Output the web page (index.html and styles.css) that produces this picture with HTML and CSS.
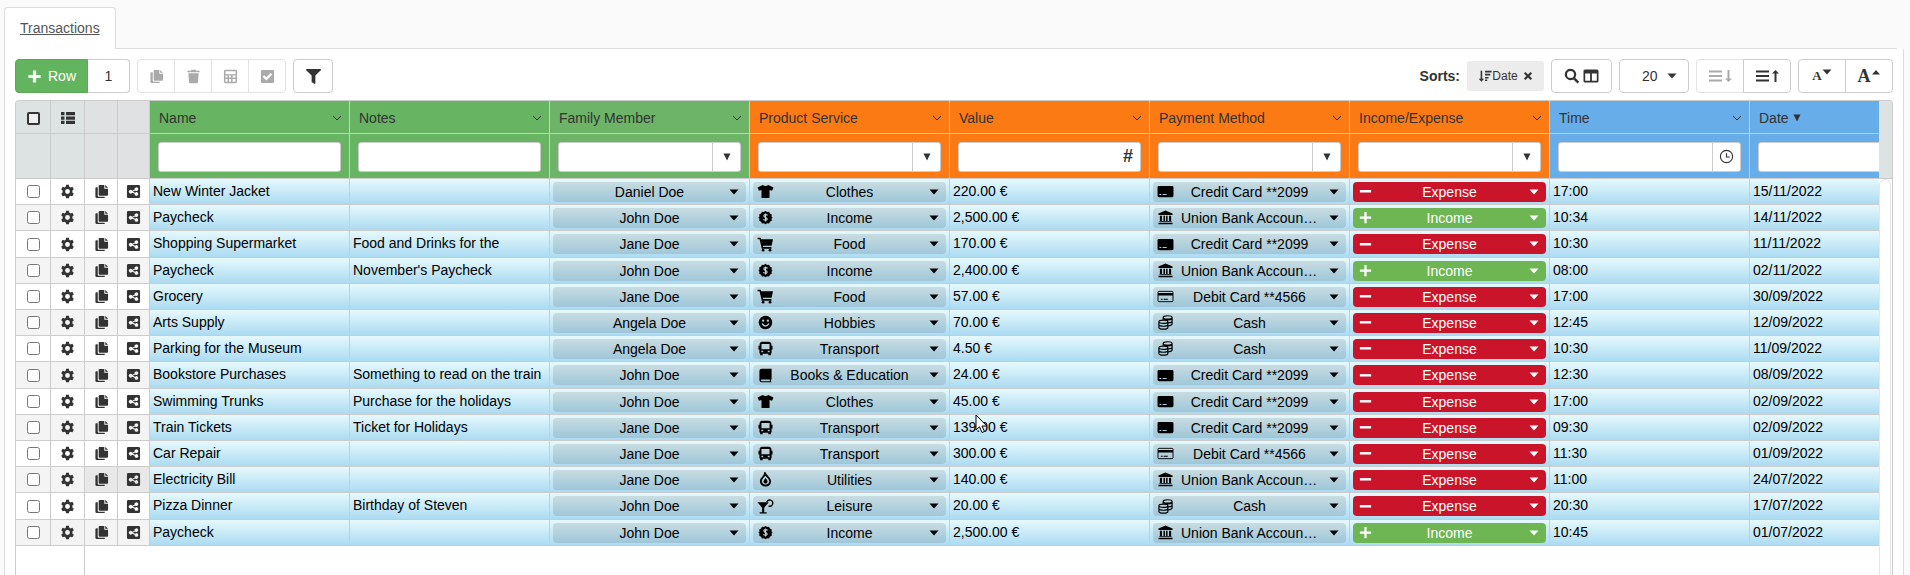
FILE: index.html
```html
<!DOCTYPE html>
<html lang="en">
<head>
    <meta charset="UTF-8">
    <meta name="viewport" content="width=device-width, initial-scale=1.0">
    <title>Transactions</title>
    <link rel="stylesheet" href="styles.css">
</head>
<body>
    <!-- Icon sprite -->
    <svg class="sprite" aria-hidden="true">
        <symbol id="i-plus" viewBox="0 0 16 16"><path d="M6.3 1.5h3.4v4.8h4.8v3.4H9.7v4.8H6.3V9.7H1.5V6.3h4.8z"/></symbol>
        <symbol id="i-plus-thin" viewBox="0 0 16 16"><path d="M6.8 2h2.4v4.8H14v2.4H9.2V14H6.8V9.2H2V6.8h4.8z"/></symbol>
        <symbol id="i-minus" viewBox="0 0 16 16"><path d="M2 6.5h12v2.6H2z"/></symbol>
        <symbol id="i-copy" viewBox="0 0 16 16"><path d="M6 1h5v4h4v6.500q0 1-1 1H6q-1 0-1-1V2q0-1 1-1zM12 1l3 3h-3zM4 3.500v9q0 1 1 1h6.500V14q0 1-1 1H3q-1.500 0-1.500-1.500v-9q0-1 1-1z"/></symbol>
        <symbol id="i-trash" viewBox="0 0 16 16"><path d="M6 .8h4l.7 1H14.500v1.700h-13V1.800h3.800zM2.500 4.500h11l-.7 9.500q-.1 1.200-1.300 1.200h-7q-1.200 0-1.300-1.200z"/></symbol>
        <symbol id="i-calc" viewBox="0 0 16 16"><path fill-rule="evenodd" d="M2.500.8h11Q15 .8 15 2.300v11.400q0 1.500-1.500 1.500h-11Q1 15.200 1 13.700V2.300Q1 .8 2.500.8zM2.600 2.400v3.200h10.800V2.400zM2.600 7v2h2.200V7zm3.800 0v2h2.200V7zm3.800 0v2h3.200V7zM2.600 10.600v3h2.200v-3zm3.800 0v3h2.200v-3zm3.800 0v3h3.200v-3z"/></symbol>
        <symbol id="i-check" viewBox="0 0 16 16"><path fill-rule="evenodd" d="M2.500 1h11Q15 1 15 2.500v11q0 1.500-1.500 1.500h-11Q1 15 1 13.500v-11Q1 1 2.500 1zm4.300 11.300 6.400-6.400-1.700-1.700-4.700 4.700-2.300-2.300-1.700 1.700z"/></symbol>
        <symbol id="i-filter" viewBox="0 0 512 512"><path d="M487.976 0H24.028C2.71 0-8.047 25.866 7.058 40.971L192 225.941V432c0 7.831 3.821 15.170 10.237 19.662l80 55.980C298.020 518.690 320 507.493 320 487.980V225.941l184.947-184.970C520.021 25.896 509.338 0 487.976 0z"/></symbol>
        <symbol id="i-list" viewBox="0 0 16 16"><path d="M1 2h3.500v3.300H1zm5 0h9v3.300H6zM1 6.400h3.500v3.300H1zm5 0h9v3.300H6zm-5 4.400h3.500V14H1zm5 0h9V14H6z"/></symbol>
        <symbol id="i-gear" viewBox="0 0 16 16"><path fill-rule="evenodd" d="M6.500.8h3l.4 2 1.300.8 2-.7 1.500 2.600-1.500 1.400v2.200l1.500 1.400-1.500 2.600-2-.7-1.300.8-.4 2h-3l-.4-2-1.300-.8-2 .7-1.500-2.600 1.500-1.400V6.900L1.300 5.500l1.500-2.600 2 .7 1.300-.8zM8 5.400a2.600 2.600 0 1 0 0 5.200 2.600 2.600 0 1 0 0-5.200z"/></symbol>
        <symbol id="i-share" viewBox="0 0 16 16"><path fill-rule="evenodd" d="M2.500 1h11Q15 1 15 2.500v11q0 1.500-1.500 1.500h-11Q1 15 1 13.500v-11Q1 1 2.500 1zm8.500 2.600a1.900 1.900 0 0 0-1.800 2.500L6.500 7.200a1.900 1.900 0 1 0 0 2l2.700 1.300a1.900 1.900 0 1 0 .6-1.200L7 8.200l2.800-1.400A1.900 1.900 0 1 0 11 3.600z"/></symbol>
        <symbol id="i-sort" viewBox="0 0 16 16"><path d="M3 2h1.800v9H7l-3.100 3.500L.8 11H3zM8 2h7.500v2H8zm0 3.500h6v1.800H8zM8 9h4v1.800H8zm0 3h2.500v1.800H8z"/></symbol>
        <symbol id="i-close" viewBox="0 0 16 16"><path d="M4 1.500 8 5.600l4-4.100L14.500 4l-4 4 4 4-2.500 2.500-4-4.100-4 4.100L1.500 12l4-4-4-4z"/></symbol>
        <symbol id="i-search" viewBox="0 0 16 16"><path fill-rule="evenodd" d="M6.500.8a5.700 5.700 0 0 1 4.700 8.900l4 4-1.700 1.800-4.100-4.100A5.700 5.700 0 1 1 6.500.8zm0 2.200a3.500 3.500 0 1 0 0 7 3.500 3.500 0 1 0 0-7z"/></symbol>
        <symbol id="i-columns" viewBox="0 0 16 16"><path fill-rule="evenodd" d="M2 1.500h12q1.500 0 1.500 1.500v10q0 1.500-1.500 1.500H2Q.5 14.500.5 13V3Q.5 1.500 2 1.500zm.2 4v7.300h4.900V5.500zm6.700 0v7.300h4.900V5.500z"/></symbol>
        <symbol id="i-lines-down" viewBox="0 0 24 16"><path d="M1 2.500h13v2H1zm0 4.500h13v2H1zm0 4.500h13v2H1zM19.500 2h2v8.500H24L20.500 14 17 10.500h2.500z"/></symbol>
        <symbol id="i-lines-up" viewBox="0 0 24 16"><path d="M1 2.500h13v2H1zm0 4.500h13v2H1zm0 4.500h13v2H1zM19.500 14h2V5.500H24L20.500 2 17 5.500h2.500z"/></symbol>
        <symbol id="i-caret" viewBox="0 0 10 6"><path d="M.5.5h9L5 5.500z"/></symbol>
        <symbol id="i-caret-up" viewBox="0 0 10 6"><path d="M1 5.500h8L5 1z"/></symbol>
        <symbol id="i-triangle" viewBox="0 0 8 8"><path d="M.5.5h7L4 7.500z"/></symbol>
        <symbol id="i-chevron" viewBox="0 0 10 6"><path d="M1 1l4 4 4-4" fill="none" stroke="currentColor"/></symbol>
        <symbol id="i-clock" viewBox="0 0 16 16"><path d="M8 1.500a6.500 6.500 0 1 0 0 13 6.500 6.500 0 1 0 0-13M8 4.500v4h3.500" fill="none" stroke="currentColor" stroke-width="1.200"/></symbol>
        <symbol id="i-shirt" viewBox="0 0 18 16"><path d="M6 1q3 2 6 0l5.500 2.600L16 7.200l-2.700-.8V15H4.700V6.400L2 7.200.5 3.600z"/></symbol>
        <symbol id="i-income" viewBox="0 0 16 16"><path d="M8 .8l1.700 1.300 2.100-.3.900 2 2 .9-.3 2.100L15.500 8l-1.100 1.400.3 2.100-2 .9-.9 2-2.100-.3L8 15.300l-1.700-1.200-2.100.3-.9-2-2-.9.300-2.100L.5 8l1.100-1.200-.3-2.100 2-.9.900-2 2.100.3z"/><path d="M10.300 5.600Q8 4.300 6.500 5.400q-.8 1.600 1.500 2.500 2.500 1 1.500 2.500-1.500 1-3.900-.2M8 3.600v8.700" fill="none" stroke="#b9d5df" stroke-width="1.200"/></symbol>
        <symbol id="i-cart" viewBox="0 0 18 16"><path d="M.5.8h3.300l.5 1.700H17l-1.500 6.700H6.200l.3 1.500h8.800V12.400H5L2.700 2.500H.5z"/><circle cx="6.500" cy="14" r="1.500"/><circle cx="13.800" cy="14" r="1.500"/></symbol>
        <symbol id="i-smile" viewBox="0 0 16 16"><circle cx="8" cy="8" r="7.200"/><path d="M4.300 9.300q3.700 5 7.400 0" fill="none" stroke="#b9d5df" stroke-width="1.400"/><circle cx="5.500" cy="6" r="1.200" fill="#b9d5df"/><circle cx="10.500" cy="6" r="1.200" fill="#b9d5df"/></symbol>
        <symbol id="i-bus" viewBox="0 0 16 16"><path fill-rule="evenodd" d="M4 .8h8q2 .4 2.300 2.200V5H15.500v4h-1v3.500q0 .8-.8 1v1.800h-2.700v-1.600H5v1.600H2.300v-1.800q-.8-.2-.8-1V9H.5V5h1.200V3Q2 1.200 4 .8zM3.700 3.200v5.500h8.600V3.200zM3.600 10.400v1.500h2v-1.500zm6.800 0v1.500h2v-1.500z"/></symbol>
        <symbol id="i-book" viewBox="0 0 16 16"><path fill-rule="evenodd" d="M4 .8h10.500v10.800q-.7.500-.7 1.700t.7 1.900H4q-2.500 0-2.500-2.500V3.300Q1.500.8 4 .8zm0 11.500q-1 .2-1 .9t1 .9h8.600v-1.800z"/></symbol>
        <symbol id="i-drop" viewBox="0 0 16 16"><path d="M7.500 1.500q1.200 2 3.800 4.700Q13 8 13 10q-.5 4.300-5 4.500-4.500-.3-5-4.500 0-2.500 2.500-4.800Q7.300 3.300 7.500 1.500z" fill="none" stroke="currentColor" stroke-width="2"/><path d="M8 6.500q2.300 2.700 2.200 3.800-.5 2-2.200 2-1.800 0-2.200-2Q6 9 8 6.500z"/></symbol>
        <symbol id="i-cocktail" viewBox="0 0 18 16"><path d="M.5 3.500h12L7.600 9.300V14h2.600v1.500H2.800V14h2.600V9.300z"/><path d="M10.300 3.200a3.300 3.300 0 1 1 2 4.300" fill="none" stroke="currentColor" stroke-width="1.500"/></symbol>
        <symbol id="i-credit" viewBox="0 0 18 16"><path fill-rule="evenodd" d="M2 2h14q1.500 0 1.500 1.500v9q0 1.500-1.500 1.500H2Q.5 14 .5 12.500v-9Q.5 2 2 2zm.6 8.600v1.200h2v-1.200zm3.400 0v1.200h4.300v-1.200z"/></symbol>
        <symbol id="i-debit" viewBox="0 0 18 16"><path fill="none" stroke="currentColor" d="M2 2.500h14q1 0 1 1v9q0 1-1 1H2q-1 0-1-1v-9q0-1 1-1z"/><path d="M1 4.200h16v2.600H1zM4 10.500h2v1H4zm3 0h4.500v1H7z"/></symbol>
        <symbol id="i-bank" viewBox="0 0 16 16"><path d="M8 .5l7.500 3.200v1.500H.5V3.700zM2 6h2.200v5.800h1.600V6H7.400v5.800h1.200V6h1.600v5.800h1.600V6H14v5.800l1 .7H1l1-.7zM.5 13.500h15V15.300H.5z"/></symbol>
        <symbol id="i-coins" viewBox="0 0 16 16"><path fill="none" stroke="currentColor" stroke-width="1.300" d="M5.500 2.600c0-2.400 9.500-2.400 9.500 0s-9.500 2.400-9.500 0v2.600M15 2.600v7.200q-.5 1.300-3.800 1.700M6.500 4.300q4.500 1.700 8.400.2M11 8.500q3.500-.2 4-1.700M1 7.200c0-2.400 9.500-2.400 9.500 0s-9.500 2.400-9.500 0v6c0 2.400 9.500 2.400 9.500 0v-6M1 10.200c0 2.400 9.500 2.400 9.500 0"/></symbol>
    </svg>

    <nav class="tabs">
        <a class="tab" href="#transactions">Transactions</a>
    </nav>

    <main class="panel" id="transactions">
        <div class="toolbar">
            <div class="btn-group">
                <button class="btn btn-add" type="button"><svg class="icon"><use href="#i-plus"/></svg>Row</button>
                <input class="row-count" type="text" value="1" aria-label="Number of rows to add">
            </div>
            <div class="btn-group tools">
                <button class="btn" type="button" disabled aria-label="Duplicate"><svg class="icon"><use href="#i-copy"/></svg></button>
                <button class="btn" type="button" disabled aria-label="Delete"><svg class="icon"><use href="#i-trash"/></svg></button>
                <button class="btn" type="button" disabled aria-label="Calculate"><svg class="icon"><use href="#i-calc"/></svg></button>
                <button class="btn" type="button" disabled aria-label="Select"><svg class="icon"><use href="#i-check"/></svg></button>
            </div>
            <button class="btn btn-filter" type="button" aria-label="Filter"><svg class="icon"><use href="#i-filter"/></svg></button>

            <strong class="sorts-label">Sorts:</strong>
            <button class="sort-chip" type="button"><svg class="icon"><use href="#i-sort"/></svg>Date<svg class="icon icon-close"><use href="#i-close"/></svg></button>
            <button class="btn btn-search" type="button" aria-label="Search columns"><svg class="icon"><use href="#i-search"/></svg><svg class="icon"><use href="#i-columns"/></svg></button>
            <div class="page-size">
                <select aria-label="Rows per page"><option>20</option></select>
                <svg class="caret"><use href="#i-caret"/></svg>
            </div>
            <div class="btn-group heights">
                <button class="btn" type="button" disabled aria-label="Decrease row height"><svg class="icon-wide"><use href="#i-lines-down"/></svg></button>
                <button class="btn" type="button" aria-label="Increase row height"><svg class="icon-wide"><use href="#i-lines-up"/></svg></button>
            </div>
            <div class="btn-group fonts">
                <button class="btn" type="button" aria-label="Smaller text"><span class="font-small">A</span><svg class="caret"><use href="#i-caret"/></svg></button>
                <button class="btn" type="button" aria-label="Larger text"><span class="font-large">A</span><svg class="caret"><use href="#i-caret-up"/></svg></button>
            </div>
        </div>

        <div class="grid">
            <div class="viewport">
                <table>
                    <colgroup>
                        <col class="col-check"><col class="col-menu"><col class="col-copy"><col class="col-share">
                        <col><col><col><col><col><col><col><col><col>
                    </colgroup>
                    <thead>
                        <tr class="titles" id="titles"></tr>
                        <tr class="filters" id="filters"></tr>
                    </thead>
                    <tbody id="rows"></tbody>
                </table>
                <div class="filler"></div>
                <svg class="pointer" viewBox="0 0 13 20" aria-hidden="true"><path d="M1 1v15l3.500-3.300L7 18.500l2.500-1L7 12h4.800z"/></svg>
            </div>
            <div class="scroll">
                <div class="scroll-head"></div>
                <div class="scroll-thumb"></div>
            </div>
        </div>
    </main>

    <script src="script.js"></script>
</body>
</html>
```
FILE: styles.css
```css
:root {
    --line: #ccc;
    --green: #67b462;
    --orange: #fb7a14;
    --blue: #66ade9;
    --income: #6eb554;
    --expense: #c91429;
    --text: #333;
}

* {
    box-sizing: border-box;
}

body {
    display: flex;
    flex-direction: column;
    height: 100vh;
    margin: 0;
    overflow: hidden;
    background: #fafafa;
    color: var(--text);
    font-family: "Liberation Sans", Arial, sans-serif;
    font-size: 14px;
}

button, input, select {
    font: inherit;
    color: inherit;
}

svg {
    display: block;
    fill: currentColor;
}

.sprite {
    display: none;
}

.icon {
    flex: none;
    width: 15px;
    height: 15px;
}

.icon-wide {
    width: 24px;
    height: 16px;
}

.caret {
    width: 10px;
    height: 6px;
    pointer-events: none;
}

/* Tabs */
.tabs {
    display: flex;
    margin: 7px 13px 0 4px;
    border-bottom: 1px solid #ddd;
}

.tab {
    height: 42px;
    margin-bottom: -1px;
    padding: 0 15px;
    border: 1px solid #ddd;
    border-bottom: 0;
    border-radius: 4px 4px 0 0;
    background: #fff;
    color: #555;
    line-height: 41px;
}

.panel {
    display: flex;
    flex: 1;
    flex-direction: column;
    min-height: 0;
    margin: 0 6px 0 4px;
    padding: 10px 10px 0;
    border: 1px solid #ddd;
    border-width: 0 1px;
    background: #fff;
}

/* Toolbar */
.toolbar {
    display: flex;
    align-items: center;
    gap: 7px;
    margin-bottom: 7px;
}

.btn-group {
    display: flex;
}

.btn {
    display: flex;
    align-items: center;
    justify-content: center;
    height: 34px;
    padding: 0;
    border: 1px solid var(--line);
    border-radius: 4px;
    background: #fff;
}

.btn-group > :not(:first-child) {
    border-top-left-radius: 0;
    border-bottom-left-radius: 0;
}

.btn-group > :not(:last-child) {
    border-top-right-radius: 0;
    border-bottom-right-radius: 0;
}

.btn-group > .btn + .btn {
    margin-left: -1px;
}

.btn:disabled {
    border-color: #e2e2e2;
    color: #aaa;
}

.btn-add {
    gap: 6px;
    width: 73px;
    border-color: #5aa855;
    background: #62b55e;
    color: #fff;
}

.row-count {
    width: 42px;
    height: 34px;
    border: 1px solid var(--line);
    border-left: 0;
    border-radius: 4px;
    text-align: center;
}

.tools .btn {
    width: 38px;
}

.btn-filter {
    width: 40px;
}

.sorts-label {
    margin-left: auto;
}

.sort-chip {
    display: flex;
    align-items: center;
    justify-content: center;
    width: 77px;
    height: 30px;
    padding: 0;
    border: 0;
    border-radius: 3px;
    background: #ececec;
    font-size: 12px;
}

.sort-chip .icon {
    width: 14px;
    height: 14px;
}

.sort-chip .icon-close {
    width: 10px;
    height: 10px;
    margin-left: 5px;
}

.btn-search {
    gap: 3px;
    width: 61px;
}

.btn-search .icon {
    width: 16px;
    height: 16px;
}

.page-size {
    display: grid;
    align-items: center;
    width: 70px;
}

.page-size > * {
    grid-area: 1 / 1;
}

.page-size select {
    width: 100%;
    height: 34px;
    padding: 0 30px 0 22px;
    border: 1px solid var(--line);
    border-radius: 4px;
    background: #fff;
    appearance: none;
}

.page-size .caret {
    justify-self: end;
    margin-right: 12px;
}

.heights .btn, .fonts .btn {
    width: 48px;
}

.fonts .btn {
    font-family: "Liberation Serif", serif;
    font-weight: bold;
}

.fonts .caret {
    margin-bottom: 8px;
}

.font-small {
    font-size: 13px;
}

.font-large {
    font-size: 18px;
}

/* Grid */
.grid {
    display: flex;
    flex: 1;
    min-height: 0;
    border: 1px solid var(--line);
    border-bottom: 0;
    border-radius: 4px 4px 0 0;
    overflow: hidden;
}

.viewport {
    position: relative;
    display: flex;
    flex: 1;
    flex-direction: column;
    min-width: 0;
    overflow: hidden;
}

table {
    width: 1934px;
    border-spacing: 0;
    table-layout: fixed;
}

.col-check { width: 35px; }
.col-menu { width: 34px; }
.col-copy { width: 33px; }
.col-share { width: 32px; }

th, td {
    padding: 0;
    border-right: 1px solid var(--line);
    border-bottom: 1px solid var(--line);
    font-weight: normal;
    text-align: left;
    white-space: nowrap;
    overflow: hidden;
}

.titles th {
    height: 33px;
    padding: 2px 0 0;
}

.filters td {
    height: 45px;
    padding: 1px 8px 0;
}

.green { background: var(--green); }
.family { background: #6db468; }
.orange { background: var(--orange); }
.blue { background: var(--blue); }
.fixed { background: #dde2e2; }
.action { background: #e0e1e3; }

.title {
    display: flex;
    align-items: center;
    justify-content: space-between;
    padding: 0 7px 0 9px;
}

.title-text {
    display: flex;
    align-items: center;
    gap: 4px;
}

.title-text svg {
    width: 8px;
    height: 8px;
}

.title .chevron {
    width: 10px;
    height: 6px;
}

.field {
    display: flex;
    width: 183px;
    height: 30px;
    border: 1px solid var(--line);
    border-radius: 3px;
    background: #fff;
    overflow: hidden;
}

.field input {
    flex: 1;
    min-width: 0;
    padding: 0 6px;
    border: 0;
    background: none;
}

.field button {
    display: flex;
    align-items: center;
    justify-content: center;
    width: 28px;
    padding: 0;
    border: 0;
    border-left: 1px solid var(--line);
    background: none;
}

.field .number {
    width: 24px;
    border-left: 0;
    font-size: 18px;
    font-weight: bold;
}

.field .triangle {
    width: 8px;
    height: 8px;
}

tbody tr {
    height: 26px;
    color: #000;
}

/* Row height averages a little over 26px */
tbody tr:nth-child(5n+3) {
    height: 27px;
}

tbody td {
    padding: 0 3px;
    background: linear-gradient(#e6f9fd, #acdbf1);
}

tbody .text {
    padding-bottom: 2px;
}

tbody .tool {
    background: #fff;
    color: var(--text);
}

tbody tr:nth-child(even) .tool {
    background: #f4f4f4;
}

tbody .hovered .action.tool {
    background: #e8e8e8;
}

tbody .tool {
    padding: 0;
}

.tool .icon {
    margin: 0 auto;
}

.titles .icon {
    width: 16px;
    height: 16px;
}

.tool input {
    display: block;
    width: 13px;
    height: 13px;
    margin: 0 auto;
}

.titles input {
    border: 2px solid var(--text);
    border-radius: 2px;
    background: #eee;
    appearance: none;
}

.tool button {
    display: block;
    width: 100%;
    padding: 0;
    border: 0;
    background: none;
}

.chip {
    display: grid;
    align-items: center;
    border-radius: 4px;
    background: rgba(0, 0, 0, 0.1);
}

.chip > * {
    grid-area: 1 / 1;
}

.chip select {
    width: 100%;
    height: 20px;
    padding: 0 28px;
    border: 0;
    background: none;
    text-align: center;
    text-align-last: center;
    text-overflow: ellipsis;
    appearance: none;
}

.chip .lead {
    width: 17px;
    height: 15px;
    margin-left: 4px;
    pointer-events: none;
}

.chip .caret {
    justify-self: end;
    margin-right: 7px;
}

.chip.income {
    background: var(--income);
    color: #fff;
}

.chip.expense {
    background: var(--expense);
    color: #fff;
}

.filler {
    flex: 1;
    width: 69px;
    border-right: 1px solid var(--line);
}

.pointer {
    position: absolute;
    top: 313px;
    left: 959px;
    width: 13px;
    height: 20px;
    fill: #fff;
    stroke: #000;
}

/* Scrollbar */
.scroll {
    display: flex;
    flex-direction: column;
    width: 13px;
}

.scroll-head {
    height: 78px;
    border-bottom: 1px solid var(--line);
    background: #dde2e2;
}

.scroll-thumb {
    flex: 1;
    width: 12px;
    border: 1px solid #e6e6e6;
    border-bottom: 0;
    border-radius: 6px 6px 0 0;
}
```
FILE: script.js
```js
const columns = [
    { title: 'Name', color: 'green' },
    { title: 'Notes', color: 'green' },
    { title: 'Family Member', color: 'family', filter: 'list' },
    { title: 'Product Service', color: 'orange', filter: 'list' },
    { title: 'Value', color: 'orange', filter: 'number' },
    { title: 'Payment Method', color: 'orange', filter: 'list' },
    { title: 'Income/Expense', color: 'orange', filter: 'list' },
    { title: 'Time', color: 'blue', filter: 'time' },
    { title: 'Date', color: 'blue', filter: 'date', sorted: true }
];

const icons = {
    'Clothes': 'shirt',
    'Income': 'income',
    'Food': 'cart',
    'Hobbies': 'smile',
    'Transport': 'bus',
    'Books & Education': 'book',
    'Utilities': 'drop',
    'Leisure': 'cocktail',
    'Credit Card **2099': 'credit',
    'Debit Card **4566': 'debit',
    'Union Bank Account 1': 'bank',
    'Cash': 'coins'
};

const credit = 'Credit Card **2099';
const debit = 'Debit Card **4566';
const bank = 'Union Bank Account 1';

const transactions = [
    ['New Winter Jacket', '', 'Daniel Doe', 'Clothes', '220.00 €', credit, 'Expense', '17:00', '15/11/2022'],
    ['Paycheck', '', 'John Doe', 'Income', '2,500.00 €', bank, 'Income', '10:34', '14/11/2022'],
    ['Shopping Supermarket', 'Food and Drinks for the', 'Jane Doe', 'Food', '170.00 €', credit, 'Expense', '10:30', '11/11/2022'],
    ['Paycheck', 'November\'s Paycheck', 'John Doe', 'Income', '2,400.00 €', bank, 'Income', '08:00', '02/11/2022'],
    ['Grocery', '', 'Jane Doe', 'Food', '57.00 €', debit, 'Expense', '17:00', '30/09/2022'],
    ['Arts Supply', '', 'Angela Doe', 'Hobbies', '70.00 €', 'Cash', 'Expense', '12:45', '12/09/2022'],
    ['Parking for the Museum', '', 'Angela Doe', 'Transport', '4.50 €', 'Cash', 'Expense', '10:30', '11/09/2022'],
    ['Bookstore Purchases', 'Something to read on the train', 'John Doe', 'Books & Education', '24.00 €', credit, 'Expense', '12:30', '08/09/2022'],
    ['Swimming Trunks', 'Purchase for the holidays', 'John Doe', 'Clothes', '45.00 €', credit, 'Expense', '17:00', '02/09/2022'],
    ['Train Tickets', 'Ticket for Holidays', 'Jane Doe', 'Transport', '139.00 €', credit, 'Expense', '09:30', '02/09/2022'],
    ['Car Repair', '', 'Jane Doe', 'Transport', '300.00 €', debit, 'Expense', '11:30', '01/09/2022'],
    ['Electricity Bill', '', 'Jane Doe', 'Utilities', '140.00 €', bank, 'Expense', '11:00', '24/07/2022'],
    ['Pizza Dinner', 'Birthday of Steven', 'John Doe', 'Leisure', '20.00 €', 'Cash', 'Expense', '20:30', '17/07/2022'],
    ['Paycheck', '', 'John Doe', 'Income', '2,500.00 €', bank, 'Income', '10:45', '01/07/2022']
];

function icon(name, className = 'icon') {
    return `<svg class="${className}"><use href="#i-${name}"/></svg>`;
}

// Header cell with its menu arrow
function titleCell(column) {
    return `<th class="${column.color}"><div class="title">
        <span class="title-text">${column.title}${column.sorted ? icon('triangle', 'triangle') : ''}</span>
        ${icon('chevron', 'chevron')}
    </div></th>`;
}

// Filter box under each header
function filterCell(column) {
    const buttons = {
        list: `<button type="button" aria-label="Open list">${icon('triangle', 'triangle')}</button>`,
        number: '<button class="number" type="button">#</button>',
        time: `<button type="button" aria-label="Pick time">${icon('clock')}</button>`,
        date: `<button type="button" aria-label="Pick date">${icon('triangle', 'triangle')}</button>`
    };
    return `<td class="${column.color}"><div class="field">
        <input type="text" aria-label="Filter ${column.title}">${buttons[column.filter] || ''}
    </div></td>`;
}

function chip(value, label, lead, type = '') {
    return `<div class="chip ${type}">
        <select aria-label="${label}"><option>${value.replace('&', '&amp;')}</option></select>
        ${lead ? icon(lead, 'lead') : ''}
        ${icon('caret', 'caret')}
    </div>`;
}

function dataCell(value, index) {
    const label = columns[index].title;
    if (label === 'Income/Expense') {
        const income = value === 'Income';
        return `<td>${chip(value, label, income ? 'plus-thin' : 'minus', value.toLowerCase())}</td>`;
    }
    if (columns[index].filter === 'list') {
        return `<td>${chip(value, label, icons[value])}</td>`;
    }
    return `<td class="text">${value}</td>`;
}

document.getElementById('titles').innerHTML = `
    <th class="tool fixed"><input type="checkbox" aria-label="Select all rows"></th>
    <th class="tool fixed">${icon('list')}</th>
    <th class="action"></th>
    <th class="action"></th>` + columns.map(titleCell).join('');

document.getElementById('filters').innerHTML =
    '<td class="fixed"></td><td class="fixed"></td><td class="action"></td><td class="action"></td>' +
    columns.map(filterCell).join('');

document.getElementById('rows').innerHTML = transactions.map(row => `
    <tr class="${row[0] === 'Electricity Bill' ? 'hovered' : ''}">
        <td class="tool"><input type="checkbox" aria-label="Select ${row[0]}"></td>
        <td class="tool"><button type="button" aria-label="Settings">${icon('gear')}</button></td>
        <td class="tool action"><button type="button" aria-label="Copy">${icon('copy')}</button></td>
        <td class="tool action"><button type="button" aria-label="Share">${icon('share')}</button></td>
        ${row.map(dataCell).join('')}
    </tr>`).join('');
```
